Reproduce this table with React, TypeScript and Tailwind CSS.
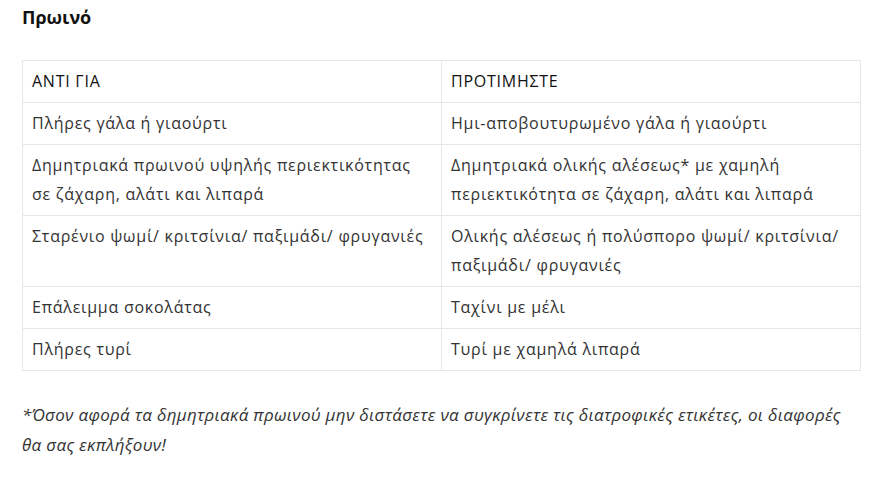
import { Fragment } from 'react';

// each cell is a list of lines, broken where the original page wraps them
const rows: [string[], string[]][] = [
  [['Πλήρες γάλα ή γιαούρτι'], ['Ημι-αποβουτυρωμένο γάλα ή γιαούρτι']],
  [
    ['Δημητριακά πρωινού υψηλής περιεκτικότητας', 'σε ζάχαρη, αλάτι και λιπαρά'],
    ['Δημητριακά ολικής αλέσεως* με χαμηλή', 'περιεκτικότητα σε ζάχαρη, αλάτι και λιπαρά'],
  ],
  [
    ['Σταρένιο ψωμί/ κριτσίνια/ παξιμάδι/ φρυγανιές'],
    ['Ολικής αλέσεως ή πολύσπορο ψωμί/ κριτσίνια/', 'παξιμάδι/ φρυγανιές'],
  ],
  [['Επάλειμμα σοκολάτας'], ['Ταχίνι με μέλι']],
  [['Πλήρες τυρί'], ['Τυρί με χαμηλά λιπαρά']],
];

const Lines = ({ lines }: { lines: string[] }) => (
  <>
    {lines.map((l, i) => (
      <Fragment key={i}>
        {i > 0 && <br />}
        {l}
      </Fragment>
    ))}
  </>
);

export default function App() {
  return (
    <div className="min-h-screen bg-white px-[22px] pt-[4px] font-['Open_Sans',sans-serif] text-[#333]">
      <h2 className="text-[18px] font-bold leading-[26px] text-[#111]">Πρωινό</h2>

      <table className="mt-[30px] w-[839px] table-fixed border-collapse text-[16px] leading-[29px] tracking-[0.75px]">
        <thead>
          <tr>
            <th className="w-1/2 border border-[#e6e6e6] px-[9px] py-[6px] text-left font-normal text-[#111]">ΑΝΤΙ ΓΙΑ</th>
            <th className="w-1/2 border border-[#e6e6e6] px-[9px] py-[6px] text-left font-normal text-[#111]">ΠΡΟΤΙΜΗΣΤΕ</th>
          </tr>
        </thead>
        <tbody>
          {rows.map(([a, b]) => (
            <tr key={a[0]}>
              <td className="whitespace-nowrap border border-[#e6e6e6] px-[9px] py-[6px] align-top">
                <Lines lines={a} />
              </td>
              <td className="whitespace-nowrap border border-[#e6e6e6] px-[9px] py-[6px] align-top">
                <Lines lines={b} />
              </td>
            </tr>
          ))}
        </tbody>
      </table>

      <p className="mt-[29px] whitespace-nowrap text-[17px] italic leading-[30px] tracking-[0.3px] text-[#333]">
        *Όσον αφορά τα δημητριακά πρωινού μην διστάσετε να συγκρίνετε τις διατροφικές ετικέτες, οι διαφορές
        <br />
        θα σας εκπλήξουν!
      </p>
    </div>
  );
}
